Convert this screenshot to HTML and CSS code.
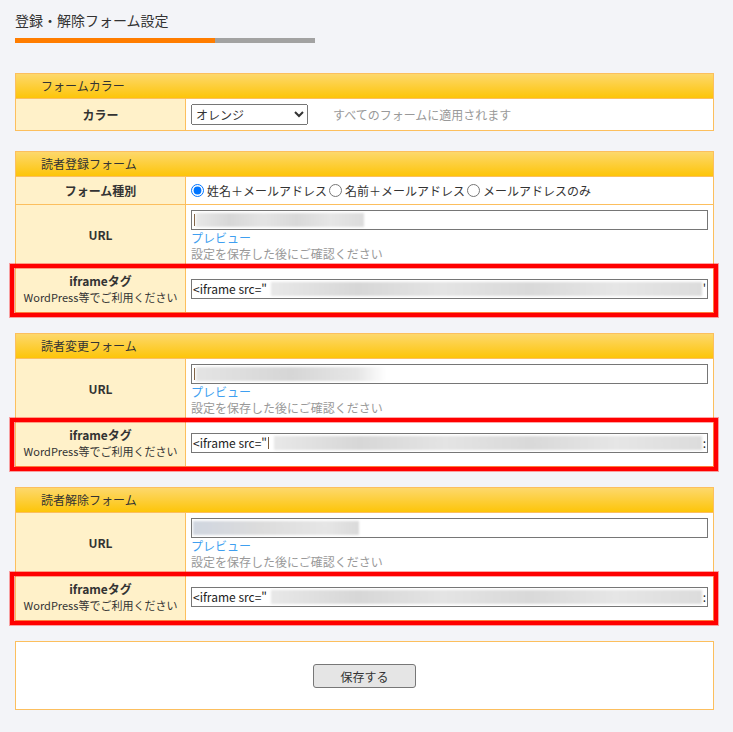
FILE: index.html
```html
<!DOCTYPE html>
<html lang="ja">
<head>
  <meta charset="UTF-8" />
  <meta name="viewport" content="width=device-width, initial-scale=1.0"/>
  <title>登録・解除フォーム設定</title>
  <link rel="stylesheet" href="styles.css">
</head>
<body>
  <div class="page">
    <h1 class="page-title">登録・解除フォーム設定</h1>
    <div class="title-bar"><span class="done"></span><span class="rest"></span></div>

    <div class="panel">
      <div class="panel-head">フォームカラー</div>
      <div class="row">
        <div class="label">カラー</div>
        <div class="value value-color">
          <select class="color-select">
            <option>オレンジ</option>
            <option>ブルー</option>
            <option>グリーン</option>
          </select>
          <span class="hint">すべてのフォームに適用されます</span>
        </div>
      </div>
    </div>

    <div class="panel">
      <div class="panel-head">読者登録フォーム</div>
      <div class="row">
        <div class="label">フォーム種別</div>
        <div class="value value-radio">
          <label class="radio"><input type="radio" name="kind" checked>姓名＋メールアドレス</label>
          <label class="radio"><input type="radio" name="kind">名前＋メールアドレス</label>
          <label class="radio"><input type="radio" name="kind">メールアドレスのみ</label>
        </div>
      </div>
      <div class="row">
        <div class="label">URL</div>
        <div class="value">
          <div class="field"><span class="caret"></span><span class="blur" style="width:168px"></span></div>
          <a class="preview" href="#">プレビュー</a>
          <div class="note">設定を保存した後にご確認ください</div>
        </div>
      </div>
      <div class="row marked">
        <div class="label">iframeタグ<span class="sub">WordPress等でご利用ください</span></div>
        <div class="value value-center">
          <div class="field">&lt;iframe src="<span class="blur blur-long"></span>'</div>
        </div>
      </div>
    </div>

    <div class="panel">
      <div class="panel-head">読者変更フォーム</div>
      <div class="row">
        <div class="label">URL</div>
        <div class="value">
          <div class="field"><span class="caret"></span><span class="blur blur-fade" style="width:190px"></span></div>
          <a class="preview" href="#">プレビュー</a>
          <div class="note">設定を保存した後にご確認ください</div>
        </div>
      </div>
      <div class="row marked">
        <div class="label">iframeタグ<span class="sub">WordPress等でご利用ください</span></div>
        <div class="value value-center">
          <div class="field">&lt;iframe src="<span class="caret"></span><span class="blur blur-long"></span>:</div>
        </div>
      </div>
    </div>

    <div class="panel">
      <div class="panel-head">読者解除フォーム</div>
      <div class="row">
        <div class="label">URL</div>
        <div class="value">
          <div class="field"><span class="blur blur-cool" style="width:166px"></span></div>
          <a class="preview" href="#">プレビュー</a>
          <div class="note">設定を保存した後にご確認ください</div>
        </div>
      </div>
      <div class="row marked">
        <div class="label">iframeタグ<span class="sub">WordPress等でご利用ください</span></div>
        <div class="value value-center">
          <div class="field">&lt;iframe src="<span class="blur blur-long"></span>:</div>
        </div>
      </div>
    </div>

    <div class="panel save-panel">
      <button class="save-btn">保存する</button>
    </div>
  </div>
</body>
</html>
```

FILE: styles.css
```css
* {
  box-sizing: border-box;
}
html, body {
  margin: 0;
  padding: 0;
  background: #f3f4f8;
  font-family: "Noto Sans CJK JP", "Noto Sans", sans-serif;
  font-size: 12px;
  color: #333;
}
.page {
  padding: 10px 19px 20px 15px;
}
.page-title {
  margin: 0;
  font-size: 14px;
  font-weight: normal;
  line-height: 20px;
  color: #333;
}
.title-bar {
  display: flex;
  width: 300px;
  height: 5px;
  margin: 8px 0 30px;
}
.title-bar .done {
  width: 200px;
  background: #ff7d00;
}
.title-bar .rest {
  flex: 1;
  background: #a2a2a2;
}
.panel {
  background: #fff;
  border: 1px solid #fcbf5e;
  margin-bottom: 20px;
}
.panel-head {
  height: 25px;
  line-height: 24px;
  padding-left: 25px;
  background: linear-gradient(#fdd86c, #fdc509);
  border-bottom: 1px solid #fcbf5e;
  color: #333;
}
.row {
  position: relative;
  display: grid;
  grid-template-columns: 170px 1fr;
  border-top: 1px solid #fcbf5e;
}
.panel-head + .row {
  border-top: none;
}
.row.marked::after {
  content: "";
  position: absolute;
  top: -1px;
  left: -6px;
  right: -5px;
  bottom: -5px;
  border: 4px solid #f00;
  box-shadow: 0 0 0 1px rgba(255, 0, 0, 0.35), inset 0 0 0 1px rgba(255, 0, 0, 0.35);
  pointer-events: none;
}
.label {
  display: flex;
  flex-direction: column;
  align-items: center;
  justify-content: center;
  background: #fff1c9;
  border-right: 1px solid #fcbf5e;
  font-weight: bold;
  line-height: 16px;
  text-align: center;
}
.label .sub {
  font-size: 11px;
  font-weight: normal;
}
.value {
  padding: 5px 5px 2px 5px;
  line-height: 16px;
}
.value-color {
  display: flex;
  align-items: center;
  gap: 25px;
  padding: 5px;
}
.color-select {
  width: 117px;
  height: 21px;
  font-family: inherit;
  font-size: 12px;
  color: #333;
}
.hint {
  color: #999;
}
.value-radio {
  display: flex;
  align-items: center;
  min-height: 27px;
  padding: 4px 5px;
}
.radio {
  display: flex;
  align-items: center;
  margin-right: 2px;
}
.radio input {
  width: 13px;
  height: 13px;
  margin: 0 3px 0 0;
}
.value-center {
  display: flex;
  align-items: center;
  min-height: 47px;
  padding: 5px;
}
.value-center .field {
  flex: 1;
}
.field {
  display: flex;
  align-items: center;
  height: 20px;
  padding: 0 1px;
  border: 1px solid #767676;
  background: #fff;
  white-space: nowrap;
  overflow: hidden;
  color: #222;
}
.caret {
  width: 1px;
  height: 12px;
  margin: 0 1px;
  background: #7a5a3a;
}
.blur {
  height: 14px;
  background: linear-gradient(90deg, #e8e8e8, #d7d7d7 20%, #e4e4e4 40%, #d9d9d9 60%, #e6e6e6 80%, #dcdcdc);
  filter: blur(1px);
}
.blur-fade {
  background: linear-gradient(90deg, #e4e4e4, #d6d6d6 50%, #e6e6e6 85%, #ffffff);
}
.blur-cool {
  background: linear-gradient(90deg, #d0d6e0, #dcdcdc 40%, #e6e6e6 80%, #dadada);
}
.blur-long {
  flex: 1;
  margin: 0 1px 0 4px;
}
.preview {
  display: block;
  color: #3f9ff0;
  text-decoration: none;
}
.note {
  color: #999;
}
.save-panel {
  display: flex;
  justify-content: center;
  padding: 22px 0 21px;
}
.save-btn {
  width: 103px;
  height: 24px;
  background: #e5e5e5;
  border: 1px solid #777;
  border-radius: 3px;
  font-family: inherit;
  font-size: 12px;
  color: #333;
}
```
